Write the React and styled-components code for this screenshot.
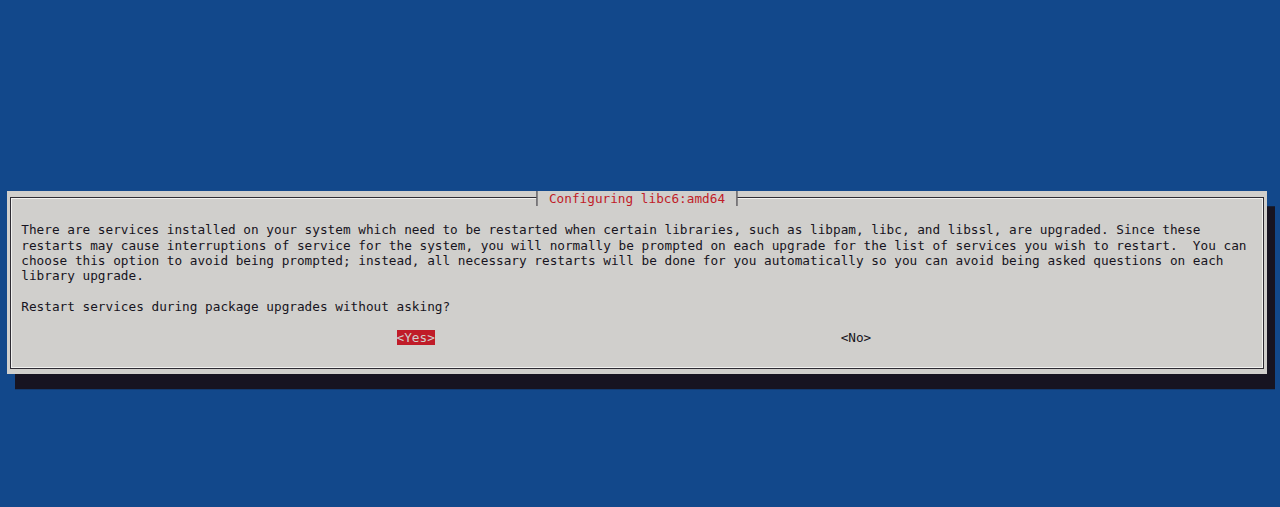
import React from 'react'
import styled, { createGlobalStyle } from 'styled-components'

const ROW = 15.25
const LINE = 15.4

const lines = [
  'There are services installed on your system which need to be restarted when certain libraries, such as libpam, libc, and libssl, are upgraded. Since these',
  'restarts may cause interruptions of service for the system, you will normally be prompted on each upgrade for the list of services you wish to restart.  You can',
  'choose this option to avoid being prompted; instead, all necessary restarts will be done for you automatically so you can avoid being asked questions on each',
  'library upgrade.',
  '',
  'Restart services during package upgrades without asking?',
]

export default function App() {
  return (
    <>
      <GlobalStyle />
      <Screen>
        <Dialog>
          <Frame>
            <Title> Configuring libc6:amd64 </Title>
            <Message>
              {lines.map((line, i) => (
                <Line key={i}>{line || ' '}</Line>
              ))}
            </Message>
            <ButtonRow>
              <Button $active>&lt;Yes&gt;</Button>
              <Button>&lt;No&gt;</Button>
            </ButtonRow>
          </Frame>
        </Dialog>
      </Screen>
    </>
  )
}

const GlobalStyle = createGlobalStyle`
  html, body {
    margin: 0;
    padding: 0;
    background: #12488b;
  }
  body {
    font-family: 'DejaVu Sans Mono', 'Liberation Mono', monospace;
    font-size: 12.72px;
  }
`

const Screen = styled.div`
  box-sizing: border-box;
  height: 507px;
  padding: 191px 0 0 7px;
  overflow: hidden;
`

const Dialog = styled.div`
  box-sizing: border-box;
  width: 1260px;
  height: ${ROW * 12}px;
  padding: 6px 3px 5px 3px;
  background: #d0cfcc;
  box-shadow: 8px ${ROW}px 0 #171421;
`

const Frame = styled.div`
  position: relative;
  box-sizing: border-box;
  height: 100%;
  padding: 24.3px 0 0 10.3px;
  border: 1px solid #2e2c33;
  box-shadow: inset 0 0 0 1px #f2f2f0;
`

const Title = styled.div`
  position: absolute;
  top: -7px;
  left: 50%;
  transform: translateX(-50%);
  height: ${ROW}px;
  line-height: ${ROW + 1}px;
  padding: 0 0.5ch;
  background: #d0cfcc;
  color: #c01c28;
  white-space: pre;
  border-left: 1px solid #2e2c33;
  border-right: 1px solid #2e2c33;
`

const Message = styled.div`
  color: #171421;
`

const Line = styled.div`
  height: ${LINE}px;
  line-height: ${LINE}px;
  white-space: pre;
`

const ButtonRow = styled.div`
  display: flex;
  gap: 53ch;
  margin-top: ${LINE}px;
  padding-left: 49ch;
`

const Button = styled.span`
  height: ${LINE}px;
  line-height: ${LINE}px;
  white-space: pre;
  background: ${p => (p.$active ? '#c01c28' : 'transparent')};
  color: ${p => (p.$active ? '#d0cfcc' : '#171421')};
`
